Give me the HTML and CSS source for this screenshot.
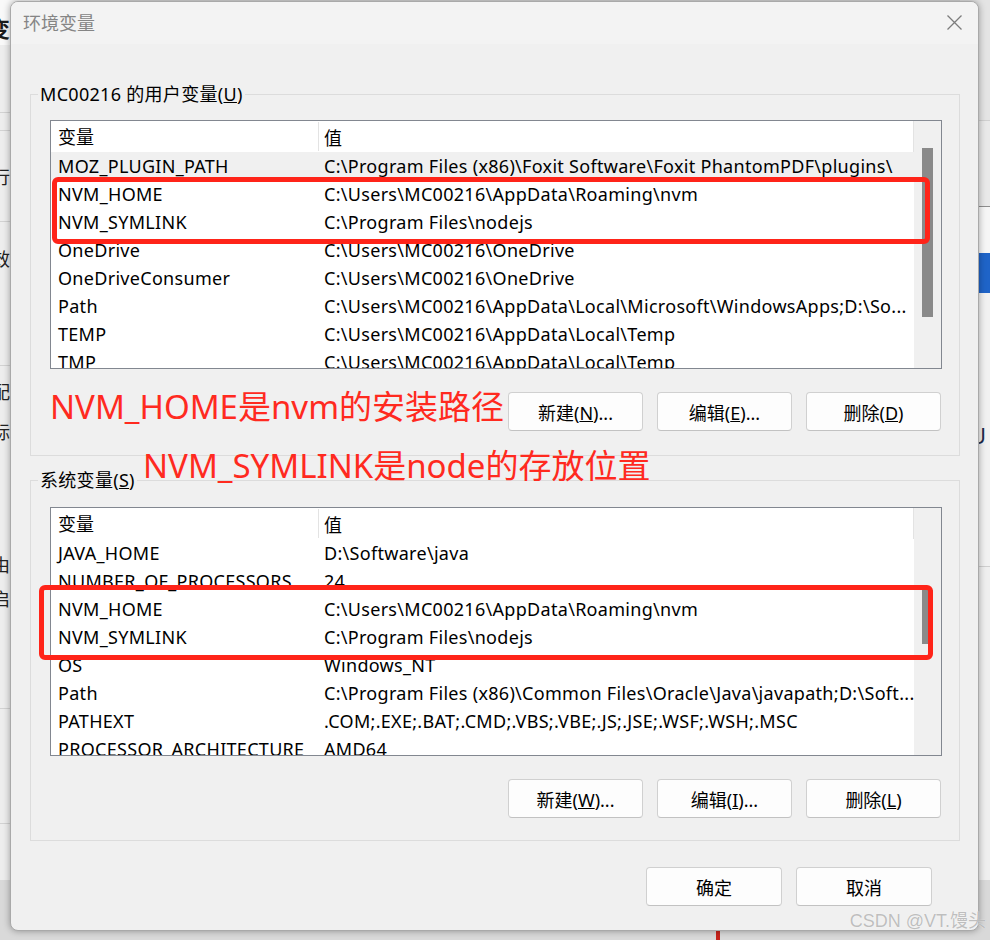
FILE: index.html
```html
<!DOCTYPE html>
<html lang="zh-CN">
<head>
<meta charset="utf-8">
<title>环境变量</title>
<link rel="stylesheet" href="styles.css">
</head>
<body>
<div class="desktop">
  <div class="backleft">
    <div class="bl-head"><span>变量</span></div>
    <div class="sp sp67"></div>
    <div class="ln"></div>
    <div class="sp sp17"></div>
    <div class="ln"></div>
    <div class="sp sp31"></div>
    <div class="frag">行</div>
    <div class="sp sp31"></div>
    <div class="ln"></div>
    <div class="sp sp22"></div>
    <div class="frag">效</div>
    <div class="sp sp93"></div>
    <div class="ln"></div>
    <div class="sp sp11"></div>
    <div class="frag">配</div>
    <div class="sp sp12"></div>
    <div class="frag">标</div>
    <div class="sp sp105"></div>
    <div class="frag">由</div>
    <div class="sp sp6"></div>
    <div class="frag">启</div>
    <div class="sp sp96"></div>
    <div class="ln"></div>
    <div class="sp sp114"></div>
    <div class="ln"></div>
    <div class="sp sp67"></div>
    <div class="ln dark"></div>
    <div class="frag ll">ll</div>
  </div>

  <div class="backright">
    <div class="br-a"></div>
    <div class="br-b"></div>
    <div class="br-c"></div>
    <div class="br-blue"></div>
    <div class="br-d"><span>U</span></div>
    <div class="br-e"></div>
  </div>

  <div class="backbottom"><span class="redbar"></span></div>

  <div class="dialog">
    <div class="titlebar">
      <span class="title">环境变量</span>
      <svg class="close" width="15" height="15" viewBox="0 0 15 15"><path d="M0.5 0.5 L14.5 14.5 M14.5 0.5 L0.5 14.5" stroke="#7c7c7c" stroke-width="1.3" fill="none"/></svg>
    </div>
    <div class="dbody">
      <fieldset class="group g-user">
        <legend>MC00216 的用户变量(<u>U</u>)</legend>
        <div class="list">
          <div class="cols">
            <div class="hdr"><div class="c1">变量</div><div class="c2">值</div></div>
            <div class="row alt"><div class="c1">MOZ_PLUGIN_PATH</div><div class="c2">C:\Program Files (x86)\Foxit Software\Foxit PhantomPDF\plugins\</div></div>
            <div class="row"><div class="c1">NVM_HOME</div><div class="c2">C:\Users\MC00216\AppData\Roaming\nvm</div></div>
            <div class="row"><div class="c1">NVM_SYMLINK</div><div class="c2">C:\Program Files\nodejs</div></div>
            <div class="row"><div class="c1">OneDrive</div><div class="c2">C:\Users\MC00216\OneDrive</div></div>
            <div class="row"><div class="c1">OneDriveConsumer</div><div class="c2">C:\Users\MC00216\OneDrive</div></div>
            <div class="row"><div class="c1">Path</div><div class="c2">C:\Users\MC00216\AppData\Local\Microsoft\WindowsApps;D:\So...</div></div>
            <div class="row"><div class="c1">TEMP</div><div class="c2">C:\Users\MC00216\AppData\Local\Temp</div></div>
            <div class="row"><div class="c1">TMP</div><div class="c2">C:\Users\MC00216\AppData\Local\Temp</div></div>
          </div>
          <div class="vscroll"><div class="thumb thumb-u"></div></div>
        </div>
        <div class="btnrow">
          <button class="btn">新建(<u>N</u>)...</button>
          <button class="btn">编辑(<u>E</u>)...</button>
          <button class="btn">删除(<u>D</u>)</button>
        </div>
      </fieldset>

      <fieldset class="group g-sys">
        <legend>系统变量(<u>S</u>)</legend>
        <div class="list">
          <div class="cols">
            <div class="hdr"><div class="c1">变量</div><div class="c2">值</div></div>
            <div class="row"><div class="c1">JAVA_HOME</div><div class="c2">D:\Software\java</div></div>
            <div class="row"><div class="c1">NUMBER_OF_PROCESSORS</div><div class="c2">24</div></div>
            <div class="row"><div class="c1">NVM_HOME</div><div class="c2">C:\Users\MC00216\AppData\Roaming\nvm</div></div>
            <div class="row"><div class="c1">NVM_SYMLINK</div><div class="c2">C:\Program Files\nodejs</div></div>
            <div class="row"><div class="c1">OS</div><div class="c2">Windows_NT</div></div>
            <div class="row"><div class="c1">Path</div><div class="c2">C:\Program Files (x86)\Common Files\Oracle\Java\javapath;D:\Soft...</div></div>
            <div class="row"><div class="c1">PATHEXT</div><div class="c2">.COM;.EXE;.BAT;.CMD;.VBS;.VBE;.JS;.JSE;.WSF;.WSH;.MSC</div></div>
            <div class="row"><div class="c1">PROCESSOR_ARCHITECTURE</div><div class="c2">AMD64</div></div>
          </div>
          <div class="vscroll"><div class="thumb thumb-s"></div></div>
        </div>
        <div class="btnrow">
          <button class="btn">新建(<u>W</u>)...</button>
          <button class="btn">编辑(<u>I</u>)...</button>
          <button class="btn">删除(<u>L</u>)</button>
        </div>
      </fieldset>

      <div class="footer">
        <button class="btn">确定</button>
        <button class="btn">取消</button>
      </div>
    </div>
  </div>

  <div class="redbox rb1"></div>
  <div class="redbox rb2"></div>
  <div class="note n1">NVM_HOME是nvm的安装路径</div>
  <div class="note n2">NVM_SYMLINK是node的存放位置</div>
  <div class="watermark">CSDN @VT.馒头</div>
</div>
</body>
</html>
```

FILE: styles.css
```css
* { box-sizing: border-box; }
html, body { margin: 0; padding: 0; }
body {
  width: 990px;
  height: 940px;
  overflow: hidden;
  background: #d8d8d8;
  font-family: "Noto Sans", "Noto Sans CJK SC", sans-serif;
  font-size: 18px;
  color: #000;
}
.desktop {
  position: relative;
  width: 990px;
  height: 940px;
  overflow: hidden;
  background: #d8d8d8;
}

/* ---------- background windows ---------- */
.backleft {
  position: absolute;
  left: 0;
  top: 0;
  width: 40px;
  height: 940px;
  background: #ededed;
  display: flex;
  flex-direction: column;
  overflow: hidden;
}
.bl-head {
  height: 45px;
  flex: none;
  background: #f9f9f9;
  padding-top: 14px;
  font-family: "Noto Sans CJK SC", sans-serif;
  font-weight: 700;
  font-size: 22px;
  line-height: 26px;
  color: #1b1b1b;
  margin-left: -12px;
}
.sp { flex: none; }
.sp6 { height: 6px; }
.sp11 { height: 11px; }
.sp12 { height: 12px; }
.sp17 { height: 17px; }
.sp22 { height: 22px; }
.sp31 { height: 31px; }
.sp67 { height: 67px; }
.sp93 { height: 93px; }
.sp96 { height: 96px; }
.sp105 { height: 105px; }
.sp114 { height: 114px; }
.ln { flex: none; height: 1px; background: #d2d2d2; }
.ln.dark { background: #9d9d9d; }
.frag {
  flex: none;
  height: 28px;
  line-height: 28px;
  margin-left: -8px;
  font-family: "Noto Sans CJK SC", sans-serif;
  font-size: 18px;
  color: #222;
}
.frag.ll { margin-left: -2px; margin-top: 8px; font-size: 26px; color: #333; font-family: "Noto Sans", sans-serif; }

.backright {
  position: absolute;
  left: 960px;
  top: 0;
  width: 30px;
  height: 940px;
  background: #efefef;
  display: flex;
  flex-direction: column;
}
.br-a { height: 121px; background: #e4e4e4; border-bottom: 1px solid #d0d0d0; flex: none; }
.br-b { height: 86px; background: #e9e9e9; border-bottom: 1px solid #8e8e8e; flex: none; }
.br-c { height: 46px; background: #f6f6f6; flex: none; }
.br-blue { height: 40px; background: #1f64c8; flex: none; }
.br-d {
  height: 274px;
  background: #f1f1f1;
  border-bottom: 1px solid #cfcfcf;
  flex: none;
  padding-top: 128px;
  padding-left: 10px;
  font-size: 22px;
  line-height: 28px;
  color: #1e2a4a;
}
.br-e { flex: 1; background: #efefef; }

.backbottom {
  position: absolute;
  left: 0;
  top: 880px;
  width: 990px;
  height: 60px;
  background: #d9d9d9;
}
.redbar {
  position: absolute;
  left: 716px;
  top: 40px;
  width: 4px;
  height: 20px;
  background: #c7241c;
}

/* ---------- dialog ---------- */
.dialog {
  position: absolute;
  left: 10px;
  top: 1px;
  width: 969px;
  height: 930px;
  border: 1px solid #a9a9a9;
  border-radius: 8px;
  background: #f0f0f0;
  box-shadow: 0 0 7px rgba(0, 0, 0, 0.35);
  overflow: hidden;
  display: flex;
  flex-direction: column;
}
.titlebar {
  height: 42px;
  flex: none;
  background: #f3f3f3;
  display: flex;
  align-items: center;
  justify-content: space-between;
  padding: 0 16px 0 12px;
}
.title {
  font-family: "Noto Sans CJK SC", sans-serif;
  font-size: 18px;
  color: #858585;
  line-height: 24px;
  margin-top: -2px;
}
.close { display: block; margin-top: -2px; }

.dbody {
  flex: 1;
  padding: 0 18px 0 19px;
  display: flex;
  flex-direction: column;
}

.group {
  margin: 0;
  border: 1px solid #dcdcdc;
  padding: 15px 17px 24px 19px;
  min-width: 0;
}
.group legend {
  padding: 0 2px;
  margin-left: -12px;
  line-height: 22px;
  font-size: 18px;
  letter-spacing: 0.3px;
  color: #000;
}
.g-user { margin-top: 39px; }
.g-sys { margin-top: 13px; padding-top: 16px; padding-bottom: 22px; }

.list {
  height: 249px;
  border: 1px solid #828790;
  background: #fff;
  display: flex;
  overflow: hidden;
}
.cols {
  flex: 1;
  min-width: 0;
  overflow: hidden;
  letter-spacing: 0.3px;
}
.hdr {
  height: 31px;
  display: flex;
  align-items: center;
  background: #fff;
  border-right: 1px solid #e3e3e3;
}
.hdr .c1 {
  border-right: 1px solid #e3e3e3;
  height: 29px;
  line-height: 29px;
}
.c1 {
  width: 268px;
  flex: none;
  padding-left: 7px;
  white-space: nowrap;
  overflow: hidden;
}
.c2 {
  flex: 1;
  min-width: 0;
  padding-left: 5px;
  white-space: nowrap;
  overflow: hidden;
}
.hdr .c1, .hdr .c2 { font-family: "Noto Sans CJK SC", sans-serif; letter-spacing: 0; }
.row {
  height: 28px;
  line-height: 28px;
  display: flex;
}
.row.alt { background: #f0f0f0; }

.vscroll {
  width: 27px;
  flex: none;
  background: #f0f0f0;
  padding-left: 8px;
}
.thumb {
  width: 11px;
  background: #8a8a8a;
}
.thumb-u { margin-top: 27px; height: 169px; }
.thumb-s { margin-top: 82px; height: 54px; }

.btnrow {
  display: flex;
  justify-content: flex-end;
  gap: 14px;
  margin-top: 23px;
  padding-right: 1px;
}
.btn {
  width: 135px;
  height: 39px;
  margin: 0;
  padding: 0;
  background: #fdfdfd;
  border: 1px solid #d0d0d0;
  border-bottom-color: #c2c2c2;
  border-radius: 4px;
  font-family: "Noto Sans", "Noto Sans CJK SC", sans-serif;
  font-size: 18px;
  color: #000;
}
.footer {
  display: flex;
  justify-content: flex-end;
  gap: 14px;
  margin-top: 26px;
  padding-right: 28px;
}
.footer .btn { width: 136px; }

/* ---------- annotations ---------- */
.redbox {
  position: absolute;
  border: 5px solid #ff2419;
  border-radius: 6px;
}
.rb1 { left: 52px; top: 177px; width: 878px; height: 67px; }
.rb2 { left: 39px; top: 585px; width: 894px; height: 75px; }
.note {
  position: absolute;
  font-family: "Noto Sans", "Noto Sans CJK SC", sans-serif;
  font-size: 33px;
  line-height: 40px;
  color: #ff2a1f;
  white-space: nowrap;
}
.n1 { left: 50px; top: 387px; }
.n2 { left: 143px; top: 446px; }
.watermark {
  position: absolute;
  right: 4px;
  top: 909px;
  font-family: "Liberation Sans", "Noto Sans CJK SC", sans-serif;
  font-size: 18px;
  line-height: 24px;
  color: rgba(170, 170, 170, 0.75);
  text-shadow: 0 0 1px rgba(255, 255, 255, 0.9);
  white-space: nowrap;
}
```
